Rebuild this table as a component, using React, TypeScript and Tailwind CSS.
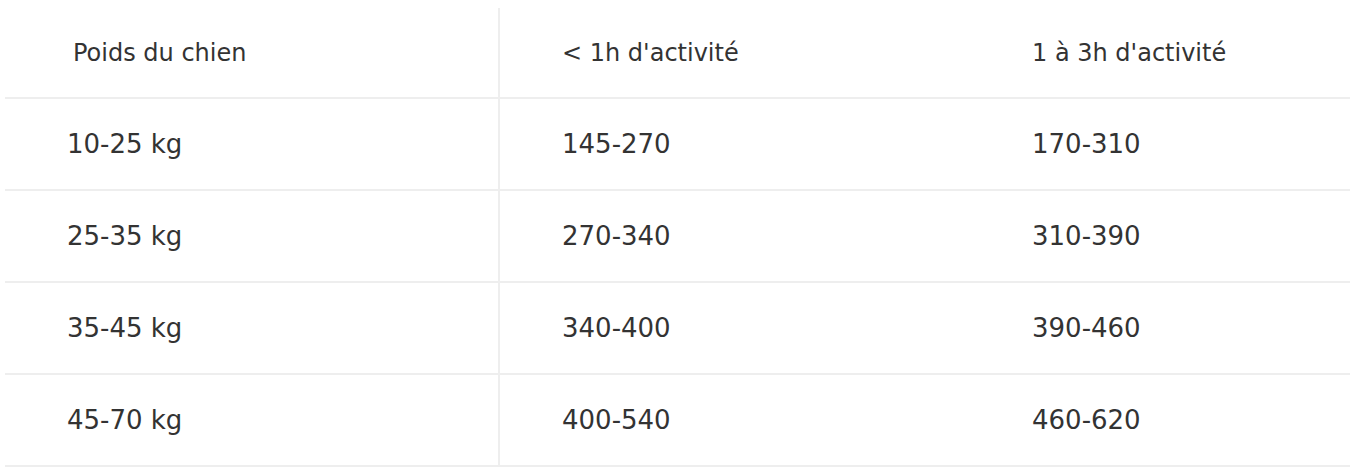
import React from "react";

const rows = [
  ["10-25 kg", "145-270", "170-310"],
  ["25-35 kg", "270-340", "310-390"],
  ["35-45 kg", "340-400", "390-460"],
  ["45-70 kg", "400-540", "460-620"],
];

const App = () => {
  return (
    <div
      className="min-h-[476px] bg-white pl-[5px] pt-[8px] text-[#333333]"
      style={{ fontFamily: '"DejaVu Sans", sans-serif' }}
    >
      <div className="flex h-[91px] border-b-2 border-[#eeeeee] text-[24px]">
        <div className="flex w-[495px] items-center border-r-2 border-[#eeeeee] pl-[68px]">
          Poids du chien
        </div>
        <div className="flex w-[470px] items-center pl-[62px]">
          &lt; 1h d'activité
        </div>
        <div className="flex flex-1 items-center pl-[62px]">
          1 à 3h d'activité
        </div>
      </div>
      {rows.map((row) => (
        <div
          key={row[0]}
          className="flex h-[92px] border-b-2 border-[#eeeeee] text-[26px]"
        >
          <div className="flex w-[495px] items-center border-r-2 border-[#eeeeee] pl-[62px]">
            {row[0]}
          </div>
          <div className="flex w-[470px] items-center pl-[62px]">{row[1]}</div>
          <div className="flex flex-1 items-center pl-[62px]">{row[2]}</div>
        </div>
      ))}
    </div>
  );
};

export default App;
